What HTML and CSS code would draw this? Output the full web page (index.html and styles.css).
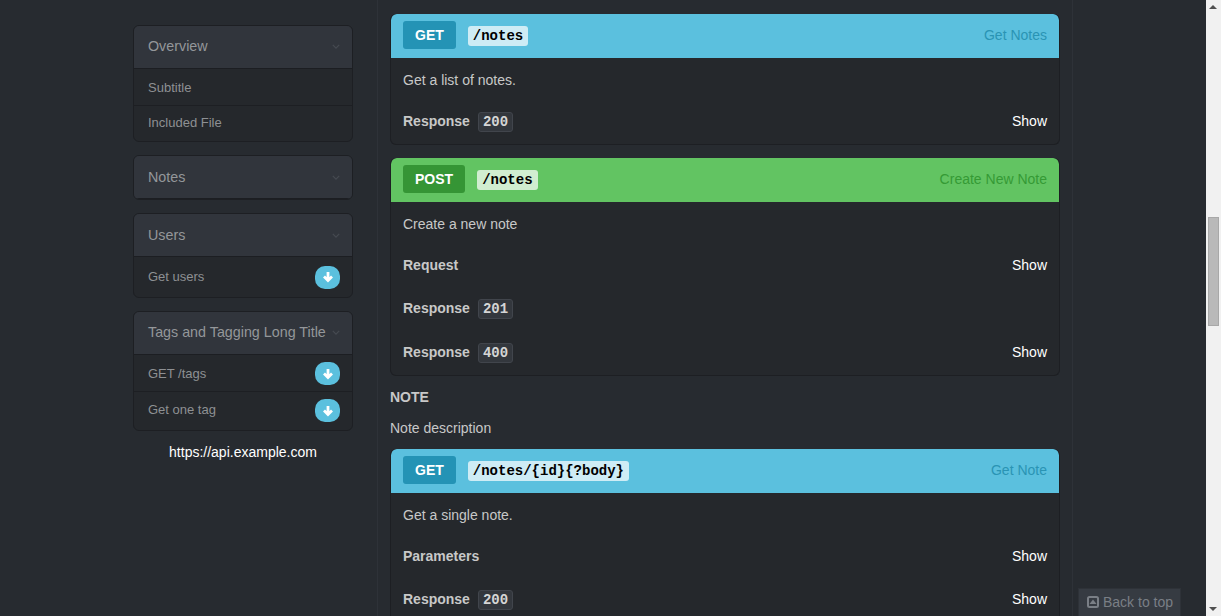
FILE: index.html
```html
<!DOCTYPE html>
<html lang="en">
<head>
  <meta charset="UTF-8" />
  <title>API Documentation</title>
  <link rel="stylesheet" href="styles.css">
</head>
<body>
  <div class="page">
    <nav class="sidebar">
      <div class="nav-panel">
        <div class="nav-heading">Overview <svg class="chevron" viewBox="0 0 10 6"><path d="M1 1l4 4 4-4" /></svg></div>
        <div class="nav-item">Subtitle</div>
        <div class="nav-item">Included File</div>
      </div>
      <div class="nav-panel">
        <div class="nav-heading nav-heading-low">Notes <svg class="chevron" viewBox="0 0 10 6"><path d="M1 1l4 4 4-4" /></svg></div>
      </div>
      <div class="nav-panel">
        <div class="nav-heading nav-heading-low">Users <svg class="chevron" viewBox="0 0 10 6"><path d="M1 1l4 4 4-4" /></svg></div>
        <div class="nav-item nav-item-single">Get users
          <span class="badge"><svg viewBox="0 0 12 12"><path d="M6 1v8.500M2 5.500l4 4 4-4" /></svg></span>
        </div>
      </div>
      <div class="nav-panel">
        <div class="nav-heading">Tags and Tagging Long Title <svg class="chevron" viewBox="0 0 10 6"><path d="M1 1l4 4 4-4" /></svg></div>
        <div class="nav-item">GET /tags
          <span class="badge"><svg viewBox="0 0 12 12"><path d="M6 1v8.500M2 5.500l4 4 4-4" /></svg></span>
        </div>
        <div class="nav-item nav-item-tall">Get one tag
          <span class="badge"><svg viewBox="0 0 12 12"><path d="M6 1v8.500M2 5.500l4 4 4-4" /></svg></span>
        </div>
      </div>
      <div class="api-host">https://api.example.com</div>
    </nav>

    <main class="content">
      <section class="action action-get">
        <header class="action-head">
          <span class="method">GET</span>
          <code class="uri">/notes</code>
          <span class="action-title">Get Notes</span>
        </header>
        <div class="action-body">
          <p class="action-desc">Get a list of notes.</p>
          <div class="row"><strong>Response</strong> <code class="status">200</code><a class="show">Show</a></div>
        </div>
      </section>

      <section class="action action-post">
        <header class="action-head">
          <span class="method">POST</span>
          <code class="uri">/notes</code>
          <span class="action-title">Create New Note</span>
        </header>
        <div class="action-body">
          <p class="action-desc">Create a new note</p>
          <div class="row"><strong>Request</strong><a class="show">Show</a></div>
          <div class="row"><strong>Response</strong> <code class="status">201</code></div>
          <div class="row"><strong>Response</strong> <code class="status">400</code><a class="show">Show</a></div>
        </div>
      </section>

      <h4 class="resource-name">NOTE</h4>
      <p class="resource-desc">Note description</p>

      <section class="action action-get">
        <header class="action-head">
          <span class="method">GET</span>
          <code class="uri">/notes/{id}{?body}</code>
          <span class="action-title">Get Note</span>
        </header>
        <div class="action-body">
          <p class="action-desc">Get a single note.</p>
          <div class="row"><strong>Parameters</strong><a class="show">Show</a></div>
          <div class="row"><strong>Response</strong> <code class="status">200</code><a class="show">Show</a></div>
        </div>
      </section>
    </main>

    <div class="fake-scrollbar">
      <span class="arrow arrow-up"></span>
      <span class="thumb"></span>
      <span class="arrow arrow-down"></span>
    </div>

    <a class="back-to-top"><svg viewBox="0 0 12 12"><rect class="box" x="1" y="1" width="10" height="10" rx="1.500" /><path class="tri" d="M6 3.500l3.500 4.500h-7z" /></svg> Back to top</a>
  </div>
</body>
</html>
```

FILE: styles.css
```css
* {
  margin: 0;
  padding: 0;
  box-sizing: border-box;
}

html,
body {
  height: 100%;
  overflow: hidden;
}

body {
  font-family: 'Liberation Sans', Arial, sans-serif;
  font-size: 14px;
  line-height: 20px;
  background: #272b30;
  color: #c8c8c8;
}

.page {
  display: flex;
  align-items: flex-start;
  height: 616px;
  padding-left: 133px;
  overflow: hidden;
}

/* sidebar */

.sidebar {
  width: 220px;
  flex-shrink: 0;
  margin-top: 25px;
  margin-right: 24px;
}

.nav-panel {
  background: #25282c;
  border: 1px solid #1d1f23;
  border-radius: 6px;
  margin-bottom: 13px;
  overflow: hidden;
}

.nav-heading {
  display: flex;
  align-items: center;
  justify-content: space-between;
  height: 43px;
  padding: 0 12px 2px 14px;
  background: #31353c;
  border-bottom: 1px solid #1c1e22;
  color: #94979a;
  font-size: 14.300px;
  white-space: nowrap;
}

.nav-heading-low {
  padding-bottom: 0;
}

.chevron {
  width: 8px;
  height: 5px;
  fill: none;
  stroke: #464a51;
  stroke-width: 1.500;
}

.nav-item {
  display: flex;
  align-items: center;
  justify-content: space-between;
  height: 37px;
  padding: 1px 12px 0 14px;
  color: #8e9093;
  font-size: 13px;
  border-bottom: 1px solid #1d1f23;
}

.nav-item:last-child {
  height: 35px;
  padding-top: 0;
  padding-bottom: 2px;
  border-bottom: 0;
}

.nav-item:last-child .badge {
  margin-top: 2px;
}

.nav-item.nav-item-single {
  height: 40px;
  padding-bottom: 0;
}

.nav-item.nav-item-single .badge {
  margin-top: 0;
}

.nav-item.nav-item-tall {
  height: 38px;
  padding-bottom: 3px;
}

.badge {
  display: flex;
  align-items: center;
  justify-content: center;
  width: 25px;
  height: 23px;
  border-radius: 10px;
  background: #5bc0de;
}

.badge svg {
  width: 12px;
  height: 12px;
  fill: none;
  stroke: #fff;
  stroke-width: 2.800;
}

.api-host {
  line-height: 16px;
  text-align: center;
  color: #fff;
}

/* main column */

.content {
  position: relative;
  width: 696px;
  flex-shrink: 0;
  height: 616px;
  padding: 14px 12px 0 12px;
  border-left: 1px solid #2e3238;
  border-right: 1px solid #2e3238;
}

.action {
  background: #25282c;
  border: 1px solid #1d1f23;
  border-top: 0;
  border-radius: 6px;
  margin-bottom: 12.500px;
  overflow: hidden;
}

.action-head {
  display: flex;
  align-items: center;
  height: 44px;
  padding: 0 12px 2px 12px;
  border-radius: 6px 6px 0 0;
}

.action-get .action-head {
  background: #5bc0de;
}

.action-post .action-head {
  background: #62c462;
}

.method {
  padding: 4px 12px;
  border-radius: 3px;
  color: #fff;
  font-weight: bold;
  margin-right: 12px;
}

.action-get .method {
  background: #2493b5;
}

.action-post .method {
  background: #359535;
}

.uri {
  margin-top: 2px;
  padding: 0 5px;
  border-radius: 3px;
  font-family: 'Liberation Mono', monospace;
  font-size: 14px;
  font-weight: bold;
  color: #000;
  background: rgba(255, 255, 255, 0.7);
}

.action-title {
  margin-left: auto;
}

.action-get .action-title {
  color: #2a94b4;
}

.action-post .action-title {
  color: #359a35;
}

.action-body {
  padding: 12px 12px 0 12px;
}

.action-desc {
  margin-bottom: 19.600px;
}

.row {
  display: flex;
  align-items: center;
  height: 23px;
  margin-bottom: 20.400px;
}

.row:last-child {
  margin-bottom: 11.800px;
}

.row strong {
  margin-right: 8px;
  color: #c8c8c8;
}

.status {
  padding: 0 4px;
  border: 1px solid #41454c;
  border-radius: 3px;
  background: #33373d;
  font-family: 'Liberation Mono', monospace;
  font-size: 14px;
  font-weight: bold;
  line-height: 18px;
  margin-top: 2px;
  color: #d5d5d5;
}

.show {
  margin-left: auto;
  color: #fff;
}

.resource-name {
  margin-bottom: 13px;
  font-size: 14px;
  line-height: 16px;
  font-weight: bold;
  color: #c8c8c8;
}

.resource-desc {
  margin-bottom: 11px;
}

/* back to top, floats over the page */

.back-to-top {
  position: absolute;
  top: 588px;
  left: 1078px;
  width: 103px;
  height: 28px;
  display: flex;
  align-items: center;
  gap: 4px;
  padding: 0 0 2px 8px;
  background: #363b42;
  border: 1px solid #2e3238;
  border-bottom: 0;
  color: #7a7f86;
}

.back-to-top svg {
  width: 12px;
  height: 12px;
}

.back-to-top .box {
  fill: none;
  stroke: #7a7f86;
  stroke-width: 2;
}

.back-to-top .tri {
  fill: #7a7f86;
}

/* window scrollbar in the screenshot */

.fake-scrollbar {
  position: absolute;
  top: 0;
  right: 0;
  width: 15px;
  height: 616px;
  background: #f1f1f1;
}

.thumb {
  position: absolute;
  top: 217px;
  left: 2px;
  width: 11px;
  height: 109px;
  background: #b9b9b9;
  border: 1px solid #a8a8a8;
}

.arrow {
  position: absolute;
  left: 3px;
  width: 0;
  height: 0;
  border-left: 4px solid transparent;
  border-right: 4px solid transparent;
}

.arrow-up {
  top: 5px;
  border-bottom: 4px solid #505050;
}

.arrow-down {
  bottom: 5px;
  border-top: 4px solid #505050;
}
```
